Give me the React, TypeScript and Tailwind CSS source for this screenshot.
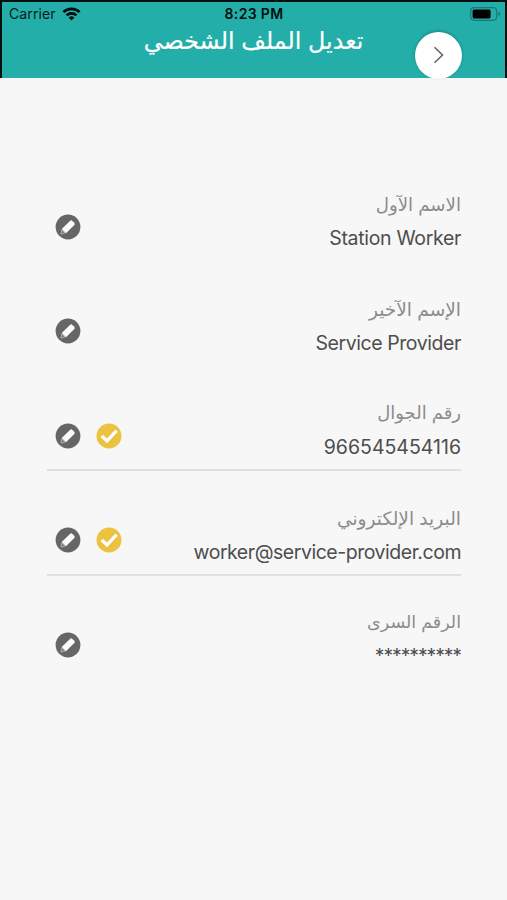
interface Field {
  label: string
  value: string
  labelClass: string
  valueClass: string
  verified?: boolean
}

const FIELDS: Field[] = [
  { label: 'الاسم الآول', value: 'Station Worker', labelClass: 'text-[18.2px]', valueClass: 'tracking-[-0.32px]' },
  { label: 'الإسم الآخير', value: 'Service Provider', labelClass: 'text-[18.6px]', valueClass: 'tracking-[-0.42px]' },
  { label: 'رقم الجوال', value: '966545454116', labelClass: 'text-[18px]', valueClass: 'tracking-normal', verified: true },
  { label: 'البريد الإلكتروني', value: 'worker@service-provider.com', labelClass: 'text-[18.6px]', valueClass: 'tracking-[-0.47px]', verified: true },
  { label: 'الرقم السرى', value: '**********', labelClass: 'text-[17.5px]', valueClass: 'tracking-[-1.15px]' },
]

function WifiIcon() {
  return (
    <svg width="19" height="14" viewBox="0 0 18 14" fill="none" stroke="#050f0f" strokeWidth="2.7">
      <path d="M.9 5.1a11.7 11.7 0 0 1 16.2 0" />
      <path d="M4 8.4a7.2 7.2 0 0 1 10 0" />
      <path d="M9 13.6 6.2 10.7a4 4 0 0 1 5.6 0Z" fill="#050f0f" stroke="none" />
    </svg>
  )
}

function BatteryIcon() {
  return (
    <svg width="31" height="14" viewBox="0 0 31 14">
      <rect x=".7" y=".7" width="26" height="12.6" rx="3.5" fill="none" stroke="#187a77" strokeWidth="1.2" />
      <rect x="2.6" y="2.6" width="18" height="8.8" rx="1.6" fill="#000" />
      <path d="M28.3 4.8q2 .6 2 2.2t-2 2.2Z" fill="#187a77" />
    </svg>
  )
}

function PencilIcon() {
  return (
    <svg width="26" height="26" viewBox="0 0 26 26">
      <circle cx="13" cy="13" r="12.4" fill="#666666" />
      <path d="M15 6.9q1.2-1.2 2.4 0l1.9 1.9q1.1 1.1 0 2.3L11 19.2l-4.3-4.3Z" fill="#fafafa" />
      <path d="m6.8 15.8 3.3 3.3-4.1 1Z" fill="#777777" stroke="#c4c4c4" strokeWidth=".7" />
    </svg>
  )
}

function CheckIcon() {
  return (
    <svg width="26" height="26" viewBox="0 0 26 26">
      <circle cx="13" cy="13" r="12.5" fill="#ebc340" />
      <path d="m5.8 12.9 5.2 5 9.6-10.3" fill="none" stroke="#fff" strokeWidth="3.4" />
    </svg>
  )
}

function Header() {
  return (
    <header className="relative h-[78px] shrink-0 border-x-2 border-t-2 border-[#021010] bg-[#23aea9]">
      <div className="grid h-[23px] grid-cols-3 items-center pr-1 pl-[7px] text-[14px] text-[#061b1a]">
        <div className="flex items-center gap-[6px]">
          <span className="tracking-[0.1px]">Carrier</span>
          <WifiIcon />
        </div>
        <span className="-ml-[2px] text-center font-semibold tracking-[0.35px] text-[#041010]">8:23 PM</span>
        <div className="flex justify-end">
          <BatteryIcon />
        </div>
      </div>
      <h1 dir="rtl" className="text-center text-[23.8px] leading-8 text-white [-webkit-text-stroke:0.2px_white]">
        تعديل الملف الشخصي
      </h1>
      <button
        aria-label="رجوع"
        className="absolute top-[29.5px] right-[43.5px] flex size-[47px] items-center justify-center rounded-full bg-white shadow-[0_-1px_3px_rgba(0,0,0,0.25)]"
      >
        <svg width="12" height="18" viewBox="0 0 12 18" className="ml-[2px]">
          <path d="m1.5 1.2 8 7.8-8 7.8" fill="none" stroke="#666" strokeWidth="1.6" />
        </svg>
      </button>
    </header>
  )
}

function FieldRow({ field }: { field: Field }) {
  return (
    <div className="h-[104.5px]">
      <div
        className={
          field.verified
            ? 'flex h-[77px] justify-between border-b-2 border-[#e0e0e0]'
            : 'flex h-[77px] justify-between border-b-2 border-transparent'
        }
      >
        <div className="flex gap-[15px] pt-[28.5px] pl-2">
          <PencilIcon />
          {field.verified && <CheckIcon />}
        </div>
        <div className="pt-1 text-right whitespace-nowrap">
          <p dir="rtl" className={`h-[33px] leading-[30px] text-[#8c8c8c] ${field.labelClass}`}>{field.label}</p>
          <p className={`text-[19.5px] leading-[32px] text-[#4d4d4d] ${field.valueClass}`}>{field.value}</p>
        </div>
      </div>
    </div>
  )
}

export default function App() {
  return (
    <div className="flex h-[900px] w-[507px] flex-col overflow-hidden bg-[#f7f7f7] font-['Inter','DejaVu_Sans',sans-serif]">
      <Header />
      <main className="flex flex-col pt-[107px] pr-[46px] pl-[47px]">
        {FIELDS.map((field) => (
          <FieldRow key={field.label} field={field} />
        ))}
      </main>
    </div>
  )
}
